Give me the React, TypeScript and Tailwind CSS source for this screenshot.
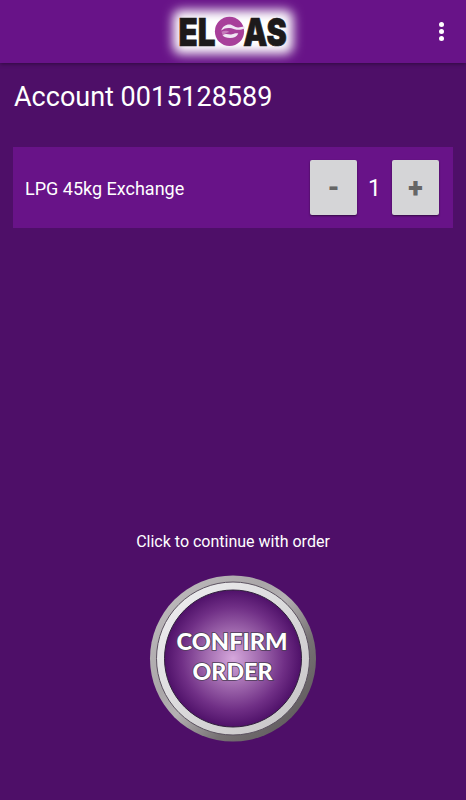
import React, { useState } from 'react';

const Logo: React.FC = () => (
  <svg width="150" height="63" viewBox="160 0 150 63" role="img" aria-label="ELGAS">
    <defs>
      <filter id="glow" x="-20%" y="-50%" width="140%" height="200%">
        <feGaussianBlur stdDeviation="5.5" />
      </filter>
    </defs>
    <rect x="173" y="10" width="120" height="44" rx="8" fill="#fff" filter="url(#glow)" />
    <g
      fill="#1d1a1b"
      stroke="#1d1a1b"
      strokeWidth="0.7"
      fontFamily="Inter, 'Liberation Sans', sans-serif"
      fontWeight="900"
      fontSize="38"
    >
      <text x="178.6" y="45.5" textLength="37" lengthAdjust="spacingAndGlyphs">EL</text>
      <text x="243.2" y="45.5" textLength="43.6" lengthAdjust="spacingAndGlyphs">AS</text>
    </g>
    {/* The G is a disc with a flame-like wave cut through it */}
    <circle cx="229.5" cy="31.4" r="14.6" fill="#a83f9a" />
    <path d="M221.3 30.6C222 26.8 225.5 24.4 229.3 24.4C233 24.4 234.5 27.2 238 27.4C240.5 27.5 242 26.4 244.6 26.6L244.9 28.6C241 29.8 238 30.4 234.5 29.2C230.5 27.9 225.5 26.8 221.3 30.6Z" fill="#f1e6f4" />
    <path d="M222.5 35C226 33 229 35 232 34.2C234.5 33.4 236 32.8 238.3 33.4C237 36.5 234 38 230 38C226.5 38 224 37.2 222.5 35Z" fill="#f1e6f4" />
    <path d="M221.5 31.8C224.5 30.2 227.5 30.8 229.5 32C227 32.6 225.5 34 222.5 34.8Z" fill="#c57bbb" />
  </svg>
);

interface StepButtonProps {
  label: string;
  onClick: () => void;
  children: React.ReactNode;
}

const StepButton: React.FC<StepButtonProps> = ({ label, onClick, children }) => (
  <button
    aria-label={label}
    onClick={onClick}
    className="flex h-[55px] w-[47px] items-center justify-center rounded-[2px] bg-[#d5d5d7] pt-0.5 text-[27px] font-black text-[#666] shadow-[0_1px_2px_rgba(0,0,0,0.5)]"
  >
    {children}
  </button>
);

const ConfirmButton: React.FC = () => (
  <button className="h-[168px] w-[168px] rounded-full">
    <svg width="168" height="168" viewBox="0 0 168 168">
      <defs>
        <linearGradient id="rim" x1="0.1" y1="0.1" x2="0.9" y2="0.85">
          <stop offset="0" stopColor="#bdbabc" />
          <stop offset="0.35" stopColor="#aaa6a8" />
          <stop offset="0.5" stopColor="#b5b1b3" />
          <stop offset="0.75" stopColor="#777274" />
          <stop offset="1" stopColor="#625d5f" />
        </linearGradient>
        <linearGradient id="band" x1="0.1" y1="0.1" x2="0.9" y2="0.9">
          <stop offset="0" stopColor="#ececee" />
          <stop offset="1" stopColor="#c9c7c8" />
        </linearGradient>
        <radialGradient id="face" cx="0.5" cy="0.5" r="0.5">
          <stop offset="0" stopColor="#d6a8dc" />
          <stop offset="0.4" stopColor="#a069ae" />
          <stop offset="0.75" stopColor="#702f86" />
          <stop offset="1" stopColor="#4f1169" />
        </radialGradient>
      </defs>
      <circle cx="84" cy="83.5" r="83" fill="url(#rim)" />
      <circle cx="84" cy="83.5" r="76.5" fill="url(#band)" stroke="#5c5260" strokeWidth="1" />
      <circle cx="84" cy="83.5" r="68.5" fill="url(#face)" stroke="#30203c" strokeWidth="1" />
      <g
        fill="#fff"
        stroke="#4b3c55"
        strokeWidth="1.6"
        paintOrder="stroke"
        fontFamily="Lato, sans-serif"
        fontWeight="900"
        fontSize="22.5"
        textAnchor="middle"
      >
        <text x="83" y="75.3" textLength="111" lengthAdjust="spacingAndGlyphs">CONFIRM</text>
        <text x="83.5" y="105.3" textLength="80" lengthAdjust="spacingAndGlyphs">ORDER</text>
      </g>
    </svg>
  </button>
);

const App: React.FC = () => {
  const [quantity, setQuantity] = useState(1);

  return (
    <div className="flex h-screen flex-col overflow-hidden bg-[#4e0f68] font-[Roboto,sans-serif] text-white">
      <header className="z-10 grid h-[63px] shrink-0 grid-cols-[160px_150px_1fr] bg-[#681388] shadow-[0_1px_4px_rgba(0,0,0,0.4)]">
        <div className="col-start-2">
          <Logo />
        </div>
        <button aria-label="Menu" className="flex flex-col items-center justify-center gap-[2px] justify-self-end px-[22.5px]">
          <span className="h-[5px] w-[5px] rounded-full bg-white" />
          <span className="h-[5px] w-[5px] rounded-full bg-white" />
          <span className="h-[5px] w-[5px] rounded-full bg-white" />
        </button>
      </header>

      <main className="flex grow flex-col px-[13px]">
        <h1 className="mt-4 pl-px text-[27px] leading-9">Account 0015128589</h1>

        <section className="mt-8 flex h-[81px] items-center justify-between bg-[#681388] pr-[14px] pl-3">
          <span className="pt-0.5 text-lg">LPG 45kg Exchange</span>
          <div className="flex items-center">
            <StepButton label="Decrease" onClick={() => setQuantity(Math.max(0, quantity - 1))}>-</StepButton>
            <span className="w-[35px] pt-1 text-center text-[23px]">{quantity}</span>
            <StepButton label="Increase" onClick={() => setQuantity(quantity + 1)}>+</StepButton>
          </div>
        </section>

        <div className="mt-auto flex flex-col items-center pb-[57px]">
          <p className="mb-[21px] text-base leading-6">Click to continue with order</p>
          <ConfirmButton />
        </div>
      </main>
    </div>
  );
};

export default App;
